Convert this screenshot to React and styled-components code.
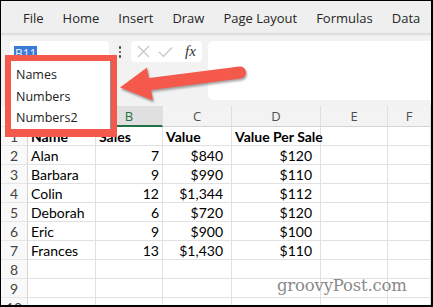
import React from "react";
import styled, { createGlobalStyle } from "styled-components";

const Global = createGlobalStyle`
  html, body { margin: 0; padding: 0; background: #fff; }
  * { box-sizing: border-box; }
`;

const RED = "#f4594b";

const Frame = styled.div`
  position: relative;
  width: 433px;
  height: 307px;
  border-style: solid;
  border-color: #000;
  border-width: 1px 2px 2px 1px;
  overflow: hidden;
  background: #fff;
  display: flex;
  flex-direction: column;
`;

const TabBar = styled.div`
  height: 32px;
  flex: none;
  background: #efefef;
  display: flex;
  align-items: center;
  padding: 2px 0 0 22px;
  gap: 19px;
  font-family: "Open Sans", sans-serif;
  font-size: 13px;
  color: #262626;
`;

const Tab = styled.span`
  white-space: nowrap;
`;

const Divider = styled.div`
  height: 3px;
  flex: none;
  background: linear-gradient(#d6d6d6, #eeeeee);
`;

const FormulaArea = styled.div`
  height: 70px;
  flex: none;
  background: #f2f2f2;
  display: flex;
  align-items: flex-start;
  padding: 5px 0 0 9px;
`;

const NameBox = styled.div`
  width: 99px;
  height: 21px;
  background: #fff;
  border-radius: 4px;
  padding: 3px 0 0 4px;
`;

const Selection = styled.span`
  display: inline-block;
  height: 16px;
  padding: 0 1px;
  background: #3a7bd5;
  color: #e6efff;
  font-family: "Open Sans", sans-serif;
  font-size: 12px;
  line-height: 16px;
  box-shadow: inset 0 -3px 0 #1d2f5c;
`;

const Dots = styled.div`
  width: 22px;
  height: 21px;
  display: flex;
  flex-direction: column;
  align-items: center;
  justify-content: center;
  gap: 2px;
  padding-top: 1px;
`;

const Dot = styled.span`
  width: 2.5px;
  height: 2.5px;
  border-radius: 50%;
  background: #444;
`;

const FxBox = styled.div`
  width: 71px;
  height: 21px;
  background: #fff;
  border-radius: 4px;
  display: flex;
  align-items: center;
  padding: 0 0 0 6px;
  gap: 8px;
`;

const FxText = styled.span`
  font-family: "Liberation Serif", serif;
  font-style: italic;
  font-size: 15px;
  color: #333;
  margin-left: 4px;
  line-height: 1;
`;

const FormulaInput = styled.div`
  flex: 1;
  height: 59px;
  margin-left: 6px;
  background: #fff;
  border-radius: 5px 0 0 5px;
`;

const Grid = styled.div`
  flex: 1;
  display: grid;
  grid-template-columns: 27px 68px 67px 69px 89px 67px 1fr;
  grid-template-rows: 21px;
  grid-auto-rows: 19px;
  font-family: Lato, sans-serif;
  font-size: 14px;
  color: #000;
`;

const ColHead = styled.div`
  display: flex;
  align-items: center;
  justify-content: center;
  background: ${(p) => (p.$active ? "#e0e0e0" : "#f3f3f3")};
  border-right: 1px solid #e0e0e0;
  border-bottom: ${(p) => (p.$active ? "2px solid #217346" : "1px solid #d4d4d4")};
  color: ${(p) => (p.$active ? "#217346" : "#505050")};
  font-family: "Open Sans", sans-serif;
  font-size: 13px;
`;

const RowHead = styled.div`
  display: flex;
  align-items: center;
  justify-content: center;
  background: #f9f9f9;
  border-right: 1px solid #d4d4d4;
  border-bottom: 1px solid #e6e6e6;
  color: #444;
  font-size: 14px;
`;

const Cell = styled.div`
  display: flex;
  align-items: center;
  justify-content: ${(p) => (p.$right ? "flex-end" : "flex-start")};
  padding: 0 ${(p) => (p.$pr ?? 3)}px 0 3px;
  border-right: 1px solid #e1e1e1;
  border-bottom: 1px solid #e1e1e1;
  font-weight: ${(p) => (p.$bold ? 700 : 400)};
  white-space: nowrap;
  overflow: visible;
`;

const Dropdown = styled.div`
  position: absolute;
  left: 9px;
  top: 59px;
  width: 101px;
  height: 70px;
  background: #fff;
  border: 1px solid #8f8f8f;
  box-shadow: 1px 1px 2px rgba(0, 0, 0, 0.3);
  padding-top: 3px;
  font-family: "Open Sans", sans-serif;
  font-size: 12.5px;
  color: #222;
`;

const Item = styled.div`
  height: 21.5px;
  display: flex;
  align-items: center;
  padding-left: 5px;
`;

const RedFrame = styled.div`
  position: absolute;
  left: 4px;
  top: 54px;
  width: 112px;
  height: 82px;
  border: 6px solid ${RED};
  border-bottom-width: 8px;
`;

const ArrowSvg = styled.svg`
  position: absolute;
  left: -1px;
  top: -1px;
  width: 433px;
  height: 307px;
  pointer-events: none;
  filter: drop-shadow(1px 2px 1px rgba(0, 0, 0, 0.35));
`;

const Watermark = styled.div`
  position: absolute;
  left: 276px;
  top: 275px;
  font-family: "DejaVu Serif", serif;
  font-size: 16.5px;
  color: #8a8a8a;
  letter-spacing: -0.2px;
`;

const tabs = ["File", "Home", "Insert", "Draw", "Page Layout", "Formulas", "Data"];
const cols = ["", "A", "B", "C", "D", "E", "F"];
const data = [
  ["Name", "Sales", "Value", "Value Per Sale"],
  ["Alan", "7", "$840", "$120"],
  ["Barbara", "9", "$990", "$110"],
  ["Colin", "12", "$1,344", "$112"],
  ["Deborah", "6", "$720", "$120"],
  ["Eric", "9", "$900", "$100"],
  ["Frances", "13", "$1,430", "$110"],
];

export default function App() {
  const rows = [];
  for (let r = 0; r < 10; r++) {
    const d = data[r];
    rows.push(<RowHead key={`h${r}`}>{r + 1}</RowHead>);
    if (d && r === 0) {
      d.forEach((v, i) => (
        rows.push(<Cell key={`c${r}-${i}`} $bold>{v}</Cell>)
      ));
    } else if (d) {
      rows.push(<Cell key={`c${r}-0`}>{d[0]}</Cell>);
      rows.push(<Cell key={`c${r}-1`} $right $pr={3}>{d[1]}</Cell>);
      rows.push(<Cell key={`c${r}-2`} $right $pr={8}>{d[2]}</Cell>);
      rows.push(<Cell key={`c${r}-3`} $right $pr={8}>{d[3]}</Cell>);
    } else {
      for (let i = 0; i < 4; i++) rows.push(<Cell key={`c${r}-${i}`} />);
    }
    rows.push(<Cell key={`c${r}-4`} />);
    rows.push(<Cell key={`c${r}-5`} />);
  }

  return (
    <>
      <Global />
      <Frame>
        <TabBar>
          {tabs.map((t) => (
            <Tab key={t}>{t}</Tab>
          ))}
        </TabBar>
        <Divider />
        <FormulaArea>
          <NameBox>
            <Selection>B11</Selection>
          </NameBox>
          <Dots>
            <Dot />
            <Dot />
            <Dot />
          </Dots>
          <FxBox>
            <svg width="13" height="13" viewBox="0 0 13 13">
              <path d="M1 1 L12 12 M12 1 L1 12" stroke="#c4c4c4" strokeWidth="1.2" fill="none" />
            </svg>
            <svg width="15" height="12" viewBox="0 0 15 12">
              <path d="M1 6 L5.5 10.5 L14 1.5" stroke="#c4c4c4" strokeWidth="1.2" fill="none" />
            </svg>
            <FxText>fx</FxText>
          </FxBox>
          <FormulaInput />
        </FormulaArea>
        <Grid>
          {cols.map((c, i) => (
            i === 0 ? <RowHead key="corner" /> : <ColHead key={c} $active={c === "B"}>{c}</ColHead>
          ))}
          {rows}
        </Grid>

        <Dropdown>
          <Item>Names</Item>
          <Item>Numbers</Item>
          <Item>Numbers2</Item>
        </Dropdown>
        <RedFrame />
        <ArrowSvg viewBox="0 0 433 307">
          <line x1="150" y1="84" x2="240" y2="72.5" stroke={RED} strokeWidth="12" strokeLinecap="round" />
          <polygon points="120,87.5 147,67.5 153,100.5" fill={RED} />
        </ArrowSvg>
        <Watermark>groovyPost.com</Watermark>
      </Frame>
    </>
  );
}
